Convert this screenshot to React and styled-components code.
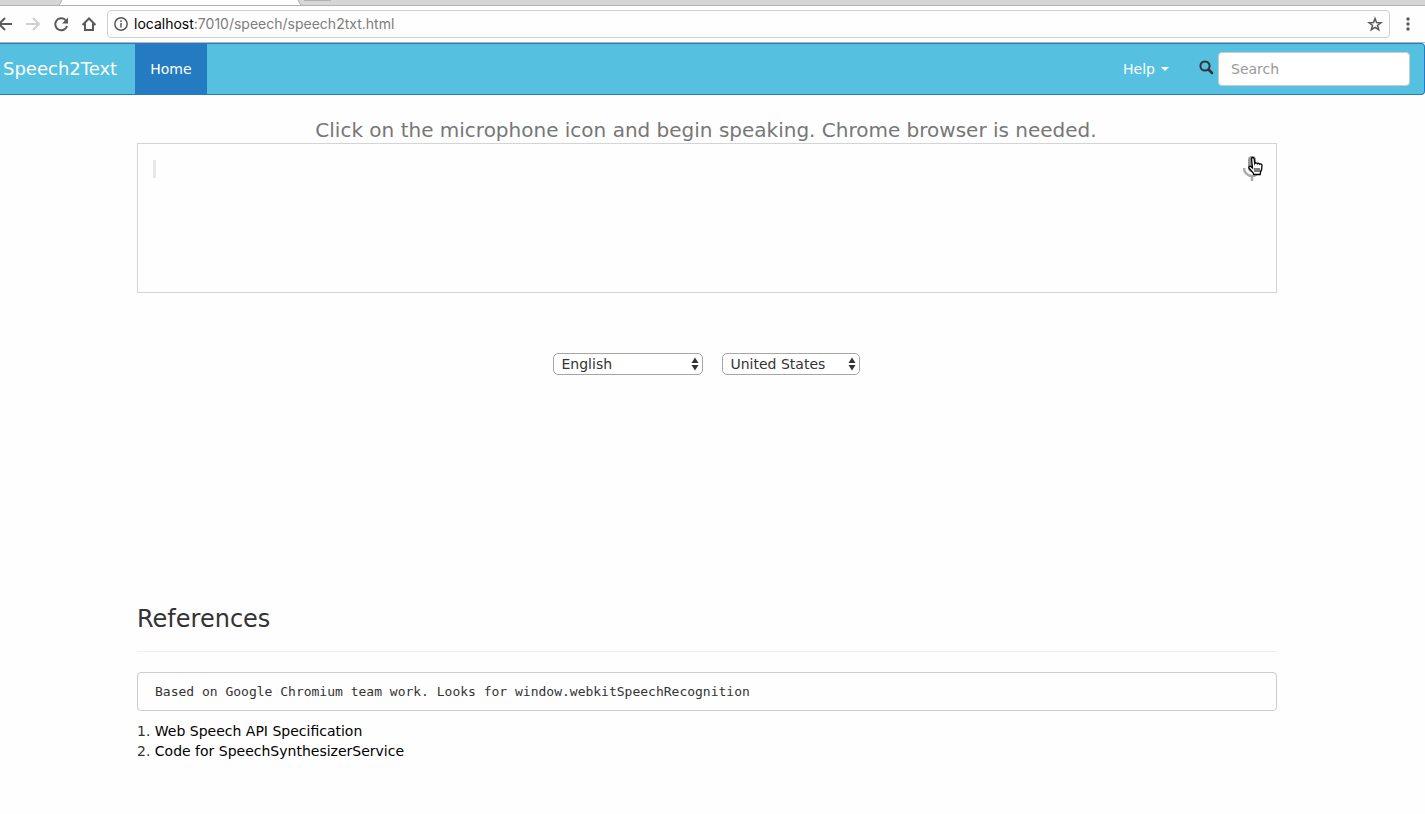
import React from "react";
import styled, { createGlobalStyle } from "styled-components";

const Global = createGlobalStyle`
  * { box-sizing: border-box; }
  body {
    margin: 0;
    background: #fefefe;
    color: #333;
    font: 14px/20px "DejaVu Sans", Verdana, sans-serif;
    overflow-x: hidden;
  }
`;

const TabStrip = styled.div`
  height: 6px;
  background: #d6d6d6;
  border-bottom: 1px solid #b2b2b2;
  overflow: hidden;
`;

const TabShapes = styled.svg`
  display: block;
`;

const Toolbar = styled.div`
  display: flex;
  align-items: center;
  height: 37px;
  padding: 0 5px 0 0;
  border-bottom: 1px solid #b6b6b6;
`;

const IconButton = styled.button`
  display: flex;
  align-items: center;
  justify-content: center;
  flex: none;
  width: ${(p) => p.$width || 28}px;
  height: 28px;
  padding: 0;
  border: 0;
  background: none;
  color: ${(p) => (p.$faded ? "#d0d0d0" : "#5a5a5a")};
`;

const NavButtons = styled.div`
  display: flex;
  margin-left: -9px;
  padding-right: 4px;
`;

const AddressBar = styled.div`
  display: flex;
  align-items: center;
  flex: 1;
  height: 28px;
  padding: 0 0 0 5px;
  gap: 5px;
  border: 1px solid #d0d0d0;
  border-radius: 4px;
  color: #5a5a5a;
  margin-right: 6px;
`;

const Url = styled.span`
  flex: 1;
  font: 14px/20px Inter, sans-serif;
  color: #7d7d7d;
`;

const Host = styled.span`
  color: #000;
`;

const Navbar = styled.nav`
  display: flex;
  align-items: center;
  height: 52px;
  padding-right: 14px;
  background: #55c0e0;
  border: 1px solid #257bc2;
  border-left: 0;
  border-radius: 0 4px 4px 0;
`;

const Brand = styled.a`
  padding: 0 18px 0 3px;
  font-size: 18px;
  color: #fff;
  text-decoration: none;
`;

const NavLink = styled.a`
  display: flex;
  align-items: center;
  gap: 6px;
  height: 50px;
  padding: 0 15px;
  color: #fff;
  text-decoration: none;
  background: ${(p) => (p.$active ? "#257bc2" : "none")};
`;

const Caret = styled.span`
  border: 4px solid transparent;
  border-top-color: #fff;
  border-bottom: 0;
`;

const SearchForm = styled.form`
  display: flex;
  align-items: center;
  gap: 4px;
  margin-left: 15px;
  color: #333;
  svg { margin-bottom: 4px; }
`;

const Spacer = styled.div`
  flex: 1;
`;

const SearchInput = styled.input`
  width: 192px;
  height: 34px;
  padding: 6px 12px;
  border: 1px solid #ccc;
  border-radius: 4px;
  background: #fff;
  font: inherit;
  &::placeholder { color: #999; opacity: 1; }
`;

const Content = styled.main`
  max-width: 1140px;
  margin: 0 auto;
`;

const Page = styled.div`
  padding: 24px 11px 24px 0;
`;

const Prompt = styled.p`
  margin: 0 2px 2px 0;
  font-size: 20px;
  line-height: 22px;
  text-align: center;
  color: #777;
`;

const ResultBox = styled.section`
  display: flex;
  justify-content: space-between;
  align-items: flex-start;
  height: 150px;
  padding: 8px 7px 8px 15px;
  border: 1px solid #d4d4d4;
`;

const InterimText = styled.span`
  width: 3px;
  height: 18px;
  margin-top: 8px;
  background: #e8e8e8;
`;

const MicButton = styled.button`
  padding: 0;
  border: 0;
  background: none;
  cursor: pointer;
`;

const Languages = styled.div`
  display: flex;
  justify-content: center;
  gap: 19px;
  margin: 60px 2px 229px 0;
`;

const SelectWrap = styled.label`
  display: grid;
  align-items: center;
  width: ${(p) => p.$width}px;
  & > * { grid-area: 1 / 1; }
  svg { justify-self: end; margin-right: 4px; pointer-events: none; }
`;

const Select = styled.select`
  appearance: none;
  width: 100%;
  height: 22px;
  padding: 0 20px 0 8px;
  border: 1px solid #a6a6a6;
  border-radius: 5px;
  background: #fff;
  color: #333;
  font: inherit;
`;

const Heading = styled.h3`
  margin: 0;
  font-size: 24px;
  line-height: 30px;
  font-weight: 400;
`;

const Rule = styled.hr`
  margin: 17px 0 20px;
  border: 0;
  border-top: 1px solid #eee;
`;

const Note = styled.pre`
  margin: 0 0 10px;
  padding: 9px 17px;
  border: 1px solid #ccc;
  border-radius: 4px;
  font: 13px/19px "DejaVu Sans Mono", monospace;
`;

const RefList = styled.ol`
  margin: 0;
  padding: 0;
  list-style-position: inside;
`;

const RefLink = styled.a`
  color: #000;
  text-decoration: none;
`;

const stroke = { fill: "none", stroke: "currentColor", strokeWidth: 2 };

function LanguageSelect({ label, value, width }) {
  return (
    <SelectWrap $width={width}>
      <Select aria-label={label} defaultValue={value}>
        <option>{value}</option>
      </Select>
      <svg width="8" height="14" viewBox="0 0 8 14" fill="#333">
        <path d="M4 0.500 7.500 6H0.500zM4 13.500 0.500 8h7z" />
      </svg>
    </SelectWrap>
  );
}

export default function App() {
  return (
    <>
      <Global />
      <TabStrip>
        <TabShapes width="340" height="6" viewBox="0 0 340 6">
          <path d="M62 0 60 4Q59 5.500 57 5.500H303Q301 5.500 300 4L298 0z" fill="#fefefe" />
          <path d="M0 5.500H57Q59 5.500 60 4L62 0M298 0 300 4Q301 5.500 303 5.500H340" fill="none" stroke="#b2b2b2" />
          <path d="M304 0H331" stroke="#b2b2b2" strokeWidth="2" />
        </TabShapes>
      </TabStrip>
      <Toolbar>
        <NavButtons>
          <IconButton aria-label="Back">
            <svg width="16" height="16" viewBox="0 0 16 16" {...stroke}><path d="M15 8H2M8 2 2 8l6 6" /></svg>
          </IconButton>
          <IconButton aria-label="Forward" $faded>
            <svg width="16" height="16" viewBox="0 0 16 16" {...stroke}><path d="M1 8h13M8 2l6 6-6 6" /></svg>
          </IconButton>
          <IconButton aria-label="Reload">
            <svg width="16" height="16" viewBox="0 0 16 16" {...stroke}><path d="M14 10A6 6 0 1 1 12.500 4" /><path d="M15 1.500V7.500H9z" fill="currentColor" stroke="none" /></svg>
          </IconButton>
          <IconButton aria-label="Home page">
            <svg width="16" height="16" viewBox="0 0 16 16" {...stroke}><path d="M1.500 9 8 2.500l6.500 6.500M4 7.500v6.500h8V7.500" /></svg>
          </IconButton>
        </NavButtons>
        <AddressBar>
          <svg width="16" height="16" viewBox="0 0 16 16" fill="none" stroke="currentColor" strokeWidth="1.500">
            <circle cx="8" cy="8" r="6.200" /><path d="M8 7v4.500M8 4.300v1.600" />
          </svg>
          <Url><Host>localhost</Host>:7010/speech/speech2txt.html</Url>
          <IconButton aria-label="Bookmark">
            <svg width="16" height="16" viewBox="0 0 16 16" fill="none" stroke="currentColor" strokeWidth="1.500"><path d="m8 2.500 1.500 4 4.500.2-3.500 2.800 1.200 4.200L8 11.300l-3.700 2.400 1.200-4.200L2 6.700l4.500-.2z" /></svg>
          </IconButton>
        </AddressBar>
        <IconButton aria-label="Menu" $width={24}>
          <svg width="4" height="14" viewBox="0 0 4 14" fill="currentColor"><circle cx="2" cy="2" r="1.700" /><circle cx="2" cy="7" r="1.700" /><circle cx="2" cy="12" r="1.700" /></svg>
        </IconButton>
      </Toolbar>
      <Navbar>
        <Brand href="#">Speech2Text</Brand>
        <NavLink href="#" $active>Home</NavLink>
        <Spacer />
        <NavLink href="#">Help<Caret /></NavLink>
        <SearchForm>
          <svg width="15" height="15" viewBox="0 0 15 15" fill="none" stroke="currentColor"><circle cx="6" cy="6" r="4.600" strokeWidth="2" /><path d="m9.500 9.500 3.500 3.500" strokeWidth="2.600" strokeLinecap="round" /></svg>
          <SearchInput aria-label="Search" placeholder="Search" />
        </SearchForm>
      </Navbar>
      <Page>
        <Content>
          <Prompt>Click on the microphone icon and begin speaking. Chrome browser is needed.</Prompt>
          <ResultBox>
            <InterimText />
            <MicButton aria-label="Start speaking">
              <svg width="32" height="34" viewBox="1237 152 32 34">
                <path d="M1244 168a8 8 0 0 0 16 0M1252 176v5" fill="none" stroke="#aaa" strokeWidth="2.400" />
                <rect x="1248" y="156" width="8" height="16" rx="4" fill="#999" />
                <path d="M1251.500 159c0-2 2.500-2 2.700 0l.6 4.500c.5-1 2.200-1 2.500.2.700-.8 2-.5 2.300.5 1-.6 2.400 0 2.400 1.300 0 3-.4 5-1.500 6.500l-.3 2.500h-6.500l-.4-1.500-4-4.500c-1.300-2 .5-2.800 1.900-1.700l1.300 1.200z" fill="#fff" stroke="#000" strokeWidth="1.300" />
                <path d="M1255 168v4M1257 168v4M1259 168v4" stroke="#000" />
              </svg>
            </MicButton>
          </ResultBox>
          <Languages>
            <LanguageSelect label="Language" value="English" width={150} />
            <LanguageSelect label="Region" value="United States" width={138} />
          </Languages>
          <Heading>References</Heading>
          <Rule />
          <Note>Based on Google Chromium team work. Looks for window.webkitSpeechRecognition</Note>
          <RefList>
            <li><RefLink href="#">Web Speech API Specification</RefLink></li>
            <li><RefLink href="#">Code for SpeechSynthesizerService</RefLink></li>
          </RefList>
        </Content>
      </Page>
    </>
  );
}
